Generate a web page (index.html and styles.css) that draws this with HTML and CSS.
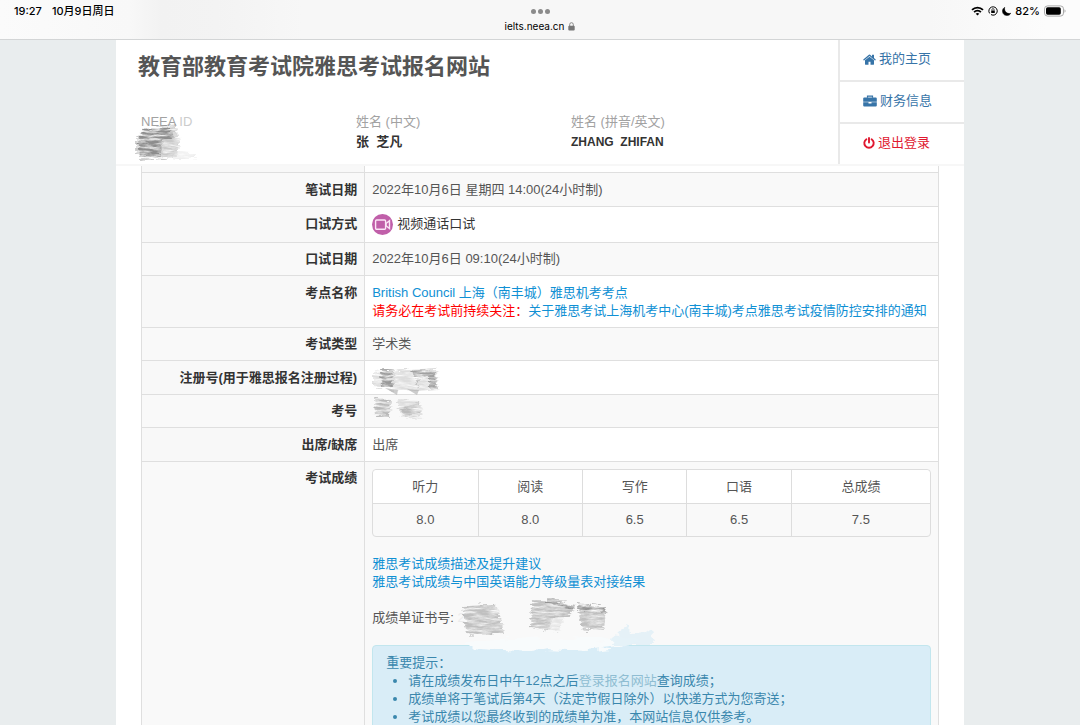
FILE: index.html
```html
<!DOCTYPE html>
<html lang="zh-CN">
<head>
<meta charset="utf-8">
<title>教育部教育考试院雅思考试报名网站</title>
<link rel="stylesheet" href="styles.css">
</head>
<body>
<svg class="defs" aria-hidden="true">
  <defs>
    <filter id="pencil" x="-10%" y="-10%" width="120%" height="120%">
      <feTurbulence type="fractalNoise" baseFrequency="0.07 0.5" numOctaves="4" seed="4" result="n"/>
      <feDisplacementMap in="SourceGraphic" in2="n" scale="9" xChannelSelector="R" yChannelSelector="G" result="d"/>
      <feColorMatrix in="n" type="matrix" values="0 0 0 0 0  0 0 0 0 0  0 0 0 0 0  2 0 0 0 -0.3" result="m"/>
      <feComposite in="d" in2="m" operator="in" result="c"/>
      <feGaussianBlur in="c" stdDeviation="0.6"/>
    </filter>
    <filter id="smear" x="-10%" y="-20%" width="120%" height="140%">
      <feTurbulence type="fractalNoise" baseFrequency="0.06 0.2" numOctaves="2" seed="9" result="n"/>
      <feDisplacementMap in="SourceGraphic" in2="n" scale="12" xChannelSelector="R" yChannelSelector="G" result="d"/>
      <feGaussianBlur in="d" stdDeviation="0.6"/>
    </filter>
  </defs>
</svg>

<header class="browser">
  <div class="browser-left"><span>19:27</span><span>10月9日周日</span></div>
  <div class="browser-center">
    <div class="dots"><i></i><i></i><i></i></div>
    <div class="address">
      <span>ielts.neea.cn</span>
      <svg width="7" height="9" viewBox="0 0 7 9"><path d="M1.7 4V2.5a1.8 1.8 0 0 1 3.6 0V4" fill="none" stroke="#888" stroke-width="1"/><rect x=".3" y="3.7" width="6.4" height="4.8" rx="1" fill="#777"/></svg>
    </div>
  </div>
  <div class="browser-right">
    <svg width="13" height="10" viewBox="0 0 13 10"><g fill="none" stroke="#000" stroke-width="1.8"><path d="M1 3.8a7.8 7.8 0 0 1 11 0"/><path d="M3.1 6.1a4.8 4.8 0 0 1 6.8 0"/></g><path d="M6.5 9.6 4.7 7.8a2.6 2.6 0 0 1 3.6 0z"/></svg>
    <svg width="10" height="10" viewBox="0 0 10 10"><path d="M1.6 7.4A4.2 4.2 0 1 1 5 9.2L3 8.6" fill="none" stroke="#000" stroke-width="1"/><rect x="3.2" y="4.4" width="3.6" height="2.7" rx=".5"/><path d="M3.9 4.6v-.9a1.1 1.1 0 0 1 2.2 0v.9" fill="none" stroke="#000" stroke-width=".7"/></svg>
    <svg width="9" height="9" viewBox="0 0 9 9"><path d="M2.700 .4C.2 1.600 -.2 5 1.600 7.100 3.600 9.300 7.400 9 8.700 6.300 4.800 7.400 1.700 4.300 2.700 .4z" stroke="#000" stroke-width=".6"/></svg>
    <span>82%</span>
    <svg width="22" height="12" viewBox="0 0 22 12"><rect x=".5" y=".9" width="19" height="10.2" rx="3" fill="none" stroke="#aaa"/><rect x="2" y="2.3" width="14.8" height="7.4" rx="1.6"/><path d="M20.500 4.2c1.4.6 1.4 3 0 3.6z" fill="#aaa"/></svg>
  </div>
</header>

<main class="page">
  <div class="masthead">
    <div class="masthead-main">
      <h1>教育部教育考试院雅思考试报名网站</h1>
      <dl class="person">
        <div><dt>NEEA <span class="faint">ID</span></dt><dd>
          <svg class="scribble scribble-id" width="70" height="40" viewBox="0 0 70 40"><g filter="url(#pencil)"><path d="M12 5 44 1 47 20 45 34 10 37 4 30 4 14z" fill="#888" opacity=".45"/><path d="M12 6 38 4 42 14 30 18 29 35 8 33 6 16z" fill="#444" opacity=".45"/><path d="M44 28 64 31 64 36 40 36z" fill="#ddd" opacity=".5"/></g></svg>
        </dd></div>
        <div><dt>姓名 (中文)</dt><dd>张&nbsp; 芝凡</dd></div>
        <div><dt>姓名 (拼音/英文)</dt><dd class="latin">ZHANG&nbsp; ZHIFAN</dd></div>
      </dl>
    </div>
    <nav class="menu">
      <a href="#home"><svg width="13" height="11" viewBox="0 200 1664 1360"><path fill="currentColor" d="M1408 992v480q0 26-19 45t-45 19H960v-384H704v384H320q-26 0-45-19t-19-45V992q0-1 .5-3t.5-3l575-474 575 474q1 2 1 6zm223-69l-62 74q-8 9-21 11h-3q-13 0-21-7L832 424l-692 577q-12 8-24 7-13-2-21-11l-62-74q-8-10-7-23.5t11-21.5l719-599q32-26 76-26t76 26l244 204V288q0-14 9-23t23-9h192q14 0 23 9t9 23v408l219 182q10 8 11 21.5t-7 23.5z"/></svg>我的主页</a>
      <a href="#finance"><svg width="14" height="12" viewBox="0 0 14 12"><path fill="none" stroke="currentColor" stroke-width="1.2" d="M4.5 2.8V1.1h5v1.7"/><path fill="currentColor" d="M1.3 2.4h11.4q1.1 0 1.1 1.1v3.2H.2V3.5q0-1.100 1.100-1.100zM.2 7.300h5.300v1.200h3V7.300h5.300v3.200q0 1.100-1.100 1.100H1.300q-1.100 0-1.100-1.100z"/></svg>财务信息</a>
      <a href="#logout" class="danger"><svg width="12" height="12" viewBox="0 0 12 12"><g fill="none" stroke="currentColor" stroke-width="1.900" stroke-linecap="round"><path d="M3.400 2.200a4.700 4.700 0 1 0 5.200 0"/><path d="M6 1v4.600"/></g></svg>退出登录</a>
    </nav>
  </div>

  <div class="content">
    <table class="details">
      <tbody>
        <tr class="stub"><th></th><td></td></tr>
        <tr class="written"><th scope="row">笔试日期</th><td>2022年10月6日 星期四 14:00(24小时制)</td></tr>
        <tr class="mode"><th scope="row">口试方式</th><td><span class="video"><svg width="21" height="21" viewBox="0 0 21 21"><circle cx="10.500" cy="10.500" r="10.500" fill="#c05fa9"/><g fill="none" stroke="#fbe6f6" stroke-width="1.400"><rect x="3.600" y="6" width="10" height="9.300" rx="1"/><path d="M14 9.500l3.500-2.800v7.800L14 11.700z"/></g></svg>视频通话口试</span></td></tr>
        <tr><th scope="row">口试日期</th><td>2022年10月6日 09:10(24小时制)</td></tr>
        <tr><th scope="row">考点名称</th><td><a href="#centre">British Council 上海（南丰城）雅思机考考点</a><br><span class="alert-text">请务必在考试前持续关注：</span><a href="#notice">关于雅思考试上海机考中心(南丰城)考点雅思考试疫情防控安排的通知</a></td></tr>
        <tr><th scope="row">考试类型</th><td>学术类</td></tr>
        <tr><th scope="row">注册号(用于雅思报名注册过程)</th><td>
          <svg class="scribble scribble-reg" width="80" height="36" viewBox="0 0 80 36"><g filter="url(#pencil)"><path d="M4 9 68 5 69 26 42 29 4 24z" fill="#aaa" opacity=".4"/><path d="M12 5 24 5 25 24 13 25z" fill="#555" opacity=".5"/><path d="M43 7 67 8 68 26 60 26 60 13 52 14 48 25z" fill="#666" opacity=".5"/></g><path d="M16 25 29 27 28 32zM38 26 50 27 48 32z" fill="#aaa" opacity=".6"/></svg></td></tr>
        <tr><th scope="row">考号</th><td>
          <svg class="scribble scribble-no" width="64" height="32" viewBox="0 0 64 32"><g filter="url(#pencil)"><path d="M5 4 22 5 21 23 6 22z" fill="#777" opacity=".5"/><path d="M28 6 50 7 54 23 33 25z" fill="#aaa" opacity=".35"/><path d="M32 14 50 9 52 20 35 22z" fill="#888" opacity=".4"/></g></svg></td></tr>
        <tr><th scope="row">出席/缺席</th><td>出席</td></tr>
        <tr><th scope="row">考试成绩</th><td>
          <table class="scores">
            <thead><tr><th scope="col">听力</th><th scope="col">阅读</th><th scope="col">写作</th><th scope="col">口语</th><th scope="col" class="total">总成绩</th></tr></thead>
            <tbody><tr><td>8.0</td><td>8.0</td><td>6.5</td><td>6.5</td><td>7.5</td></tr></tbody>
          </table>
          <p><a href="#advice">雅思考试成绩描述及提升建议</a><br><a href="#cse">雅思考试成绩与中国英语能力等级量表对接结果</a></p>
          <p class="certificate">成绩单证书号: <span class="ghost">2</span>
            <svg class="scribble scribble-cert" width="220" height="64" viewBox="0 0 220 64"><path filter="url(#smear)" d="M20 47 60 43 170 42 192 44 172 51 140 55 100 53 80 56 24 51z" fill="#f8fbfc"/><g filter="url(#pencil)"><path d="M15 10 48 9 54 23 57 38 20 39z" fill="#888" opacity=".5"/><path d="M85 4 103 6 128 12 124 20 104 22 102 35 84 31z" fill="#888" opacity=".5"/><path d="M90 20 118 18 112 35 92 32z" fill="#bbb" opacity=".35"/><path d="M130 9 159 12 157 34 136 34z" fill="#888" opacity=".5"/></g><path d="M100 1 128 9 127 13 100 7zM130 7 160 11 159 17 130 12z" fill="#666" opacity=".5" filter="url(#pencil)"/><path filter="url(#smear)" d="M164 49 166 40 174 41 180 27 184 39 196 38 206 31 208 49z" fill="#d9edf7" opacity=".6"/></svg>
          </p>
          <section class="notice">
            重要提示：
            <ul>
              <li>请在成绩发布日中午12点之后<span class="rubbed">登录报名网站</span>查询成绩；</li>
              <li>成绩单将于笔试后第4天（法定节假日除外）以快递方式为您寄送；</li>
              <li>考试成绩以您最终收到的成绩单为准，本网站信息仅供参考。</li>
            </ul>
          </section>
        </td></tr>
      </tbody>
    </table>
  </div>
</main>
</body>
</html>
```

FILE: styles.css
```css
* { box-sizing: border-box; }

body {
  margin: 0;
  height: 100vh;
  overflow: hidden;
  background: #e9edee;
  color: #555;
  font: 13px/18px "Liberation Sans", "Noto Sans CJK SC", sans-serif;
}

a { color: #1090d4; text-decoration: none; }
h1, dl, dd, p, ul { margin: 0; }
.defs { position: absolute; width: 0; height: 0; }

.browser {
  display: grid;
  grid-template-columns: 1fr auto 1fr;
  height: 40px;
  padding: 3px 14px 0;
  border-bottom: 1px solid #d3d5d6;
  background: linear-gradient(90deg, #fbfbfb 0, #f8f8f8 12%, #f2f2f2 15%, #f3f3f3 20%, #f7f7f7 28%, #f7f7f7 86%, #fcfcfc 97%);
  color: #000;
  font: 500 11px/16px Inter, "Noto Sans CJK SC", sans-serif;
}
.browser-left { display: flex; gap: 10px; }
.browser-center { display: flex; flex-direction: column; align-items: center; gap: 4px; padding-top: 6px; font-weight: 400; }
.dots { display: flex; gap: 2px; }
.dots i { width: 5px; height: 5px; border-radius: 50%; background: #8b8b8b; }
.address { display: flex; align-items: center; gap: 4px; font-size: 10px; }
.browser-right { display: flex; justify-content: flex-end; align-items: center; gap: 4px; height: 16px; }

.page { max-width: 848px; min-height: 100vh; margin: 0 auto; background: #fff; }

.masthead { display: flex; border-bottom: 2px solid #f7f7f7; }
.masthead-main { flex: 1; padding: 12px 22px 12px; }
h1 { font-size: 22px; line-height: 30px; color: #555; }
.person { display: grid; grid-template-columns: repeat(3, 215px); padding: 29px 3px 0; }
.person dt { line-height: 21px; color: #a2a2a2; }
.person dd { position: relative; line-height: 20px; color: #333; font-weight: bold; }
.person .latin { font-size: 12px; }
.faint { color: #ccc; }

.menu { display: flex; flex-direction: column; width: 126px; border-left: 2px solid #e9e9e9; }
.menu a { flex: 1; display: flex; align-items: center; gap: 3px; padding: 0 0 2px 23px; color: #3774a8; border-bottom: 2px solid #e9e9e9; }
.menu a:last-child { border-bottom: 0; }
.menu .danger { color: #e0182f; }

.content { padding: 0 25px; }

.details { width: 100%; border-collapse: collapse; }
.details > tbody > tr > th,
.details > tbody > tr > td { padding: 8px 7px 7px; border: 1px solid #dfdfdf; vertical-align: top; }
.details > tbody > tr > th { width: 28%; background: #f8f8f8; text-align: right; color: #333; }
.details > tbody > tr:nth-child(even) > th,
.details > tbody > tr:nth-child(even) > td { padding-top: 7px; background: #f9f9f9; }
.details > tbody > .stub > th,
.details > tbody > .stub > td { height: 6px; padding: 0; border-top: 0; }
.details > tbody > tr.written > th,
.details > tbody > tr.written > td { padding-top: 8px; }
.details > tbody > .mode > td { padding: 7px 7px; color: #333; }
.video { display: flex; align-items: center; gap: 4px; }
.details td { position: relative; }
.alert-text { color: #f00; }

.scores {
  width: 100%;
  margin: 0 0 18px;
  table-layout: fixed;
  border: 1px solid #ddd;
  border-radius: 4px;
  border-collapse: separate;
  border-spacing: 0;
  text-align: center;
}
.scores th, .scores td { padding: 7px 0; border-left: 1px solid #ddd; font-weight: normal; }
.scores th { padding-top: 8px; background: #fff; }
.scores td { border-top: 1px solid #ddd; }
.scores th:first-child, .scores td:first-child { border-left: 0; }
.scores th:first-child { border-top-left-radius: 4px; }
.scores th:last-child { border-top-right-radius: 4px; }
.scores .total { width: 25%; }

.certificate { position: relative; margin: 18px 0; }
.ghost { color: #ececec; }

.notice { padding: 8px 13px 18px; border: 1px solid #c2e6ee; border-radius: 4px; background: #d9edf7; color: #3a87ad; }
.notice ul { padding-left: 22px; }
.rubbed { color: #8fbdd2; }

.scribble { position: absolute; z-index: 1; }
.scribble-id { left: -9px; top: -9px; }
.scribble-reg { left: 4px; top: 2px; }
.scribble-no { left: 4px; top: -1px; }
.scribble-cert { left: 75px; top: -13px; }
```
